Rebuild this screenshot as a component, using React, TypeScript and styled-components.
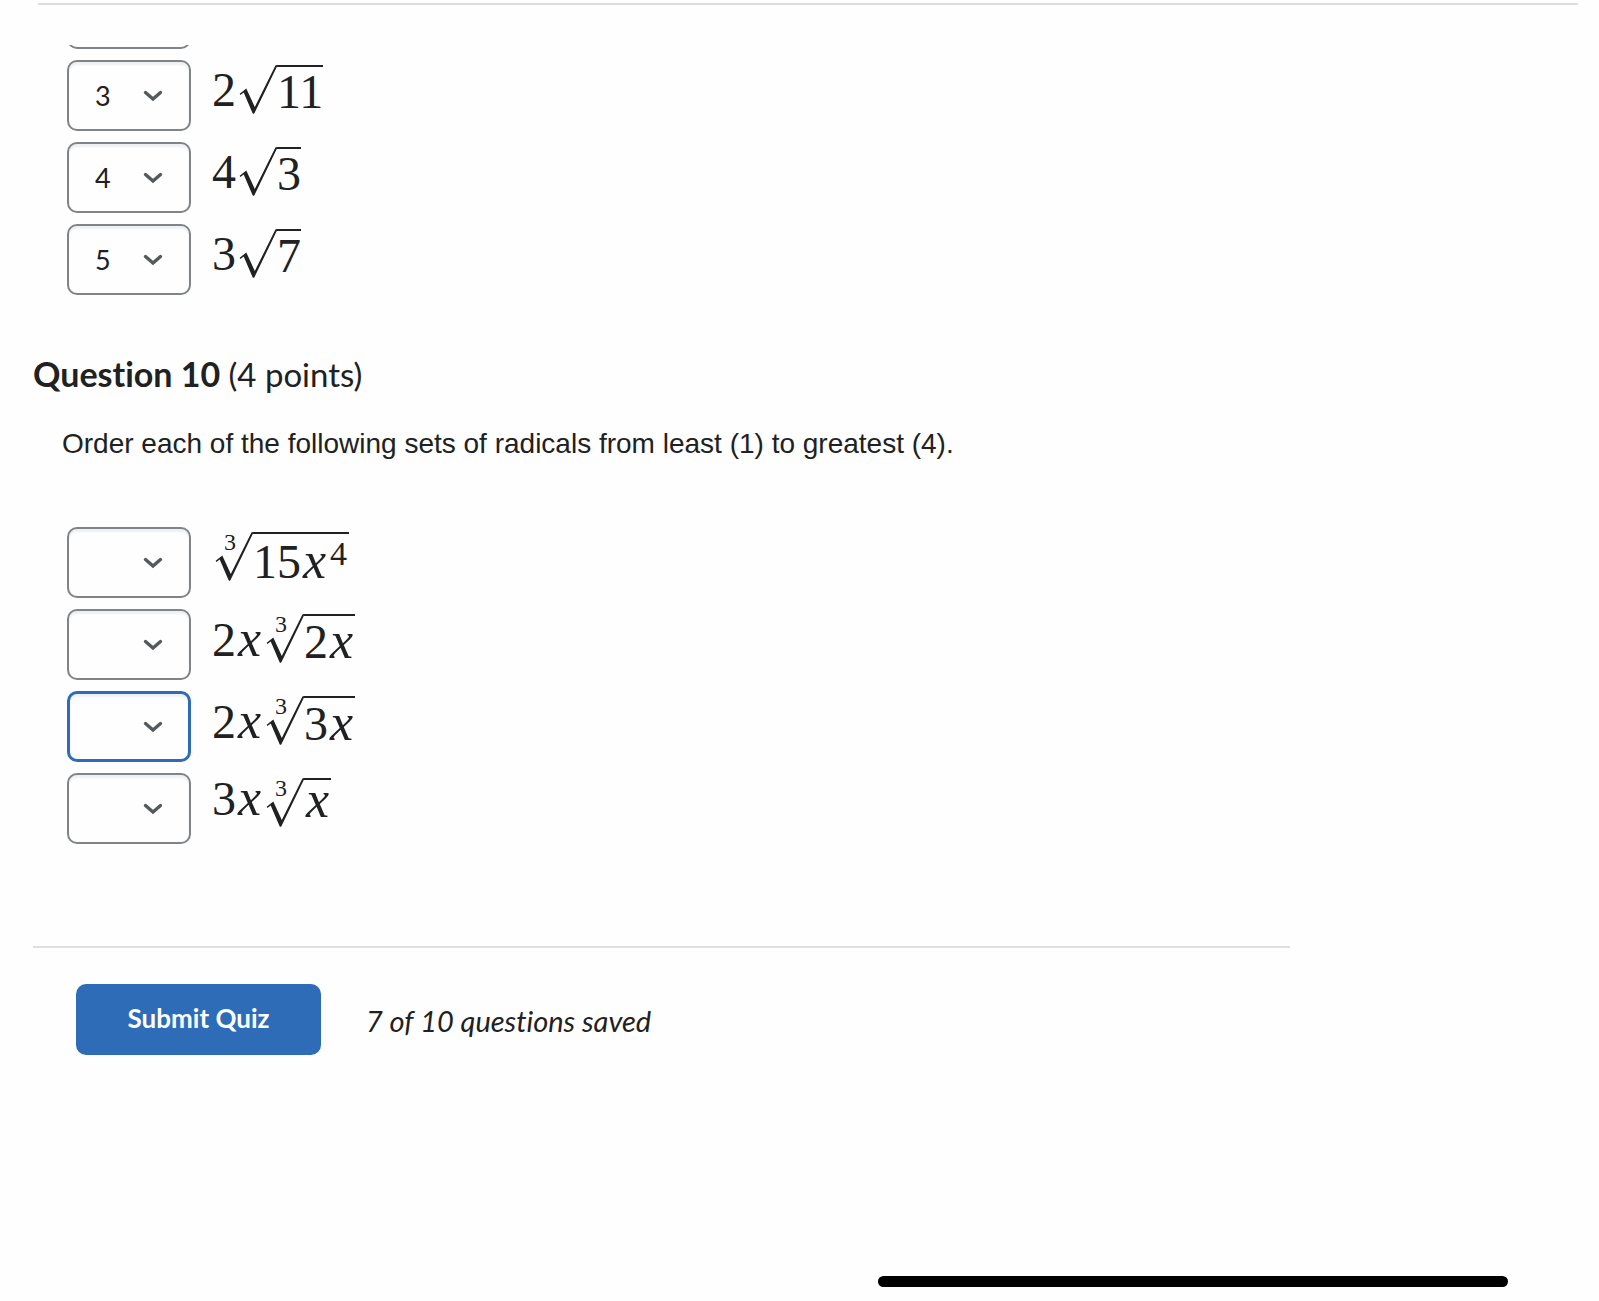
import React from "react";
import styled, { createGlobalStyle } from "styled-components";

const GlobalStyle = createGlobalStyle`
  * { box-sizing: border-box; }
  body {
    margin: 0;
    background: #fefefe;
    color: #202122;
    font-family: Lato, "Open Sans", sans-serif;
    font-variant-ligatures: none;
  }
`;

const Page = styled.main`
  padding: 3px 33px 0;
`;

const TopRule = styled.hr`
  margin: 0 -12px 40px 5px;
  border: 0;
  height: 2px;
  background: #dcdde2;
`;

const BottomRule = styled.hr`
  margin: 102px 0 36px;
  border: 0;
  height: 2px;
  width: 82%;
  background: #dedfdf;
`;

const ClippedRow = styled.div`
  display: flex;
  align-items: flex-end;
  height: 4px;
  margin: 0 0 11px 34px;
  overflow: hidden;
`;

const AnswerList = styled.ul`
  list-style: none;
  margin: 0 0 0 34px;
  padding: 0;
  display: flex;
  flex-direction: column;
  gap: 11px;
`;

const AnswerRow = styled.li`
  display: flex;
  align-items: flex-start;
  gap: 21px;
  height: 71px;
`;

const SelectWrap = styled.span`
  display: grid;
  flex: none;
  width: 124px;
  height: 71px;
  align-items: center;

  > * {
    grid-area: 1 / 1;
  }
`;

const SelectBox = styled.select<{ $active?: boolean }>`
  appearance: none;
  width: 100%;
  height: 71px;
  margin: 0;
  padding: 0 50px 0 26px;
  border: ${(p) => (p.$active ? "3px solid #2f6cb8" : "2px solid #808486")};
  border-radius: 10px;
  outline: none;
  background: #fefefe;
  box-shadow: inset 0 3px 2px #eff0f3;
  color: #202122;
  font: 400 27px/32px Lato, "Open Sans", sans-serif;
`;

const Chevron = styled.svg`
  justify-self: end;
  margin-right: 28px;
  width: 20px;
  height: 12px;
  pointer-events: none;
`;

const Title = styled.h2`
  margin: 58px 0 0;
  font-size: 34px;
  line-height: 42px;
  font-weight: 700;
`;

const Points = styled.span`
  font-size: 33px;
  font-weight: 400;
`;

const Prompt = styled.p`
  margin: 33px 0 67px 29px;
  font-family: "Liberation Sans", Arial, sans-serif;
  font-size: 28px;
  line-height: 32px;
`;

const Expression = styled.span<{ $line: number }>`
  display: flex;
  align-items: flex-start;
  padding-top: 5px;
  font-family: "Liberation Serif", "Times New Roman", serif;
  font-size: 48px;
  line-height: ${(p) => p.$line}px;
  white-space: nowrap;
`;

const Variable = styled.i`
  display: inline-block;
  width: 27px;
  font-size: 52px;
  text-align: center;
`;

const Exponent = styled.sup`
  padding: 0 2px;
  font-size: 34px;
  line-height: 0;
  vertical-align: 13px;
`;

const Root = styled.span`
  display: flex;
  position: relative;
  margin-left: 3px;
`;

const Surd = styled.svg`
  flex: none;
  width: 38px;
  height: 49px;
  fill: #202122;
`;

const Index = styled.span`
  position: absolute;
  left: 9px;
  top: 0;
  font-size: 24px;
  line-height: 20px;
`;

const Radicand = styled.span`
  border-top: 2px solid #202122;
`;

const Actions = styled.div`
  display: flex;
  align-items: center;
  gap: 45px;
  margin-left: 43px;
`;

const SubmitButton = styled.button`
  width: 245px;
  height: 71px;
  padding: 0 0 4px;
  border: 0;
  border-radius: 10px;
  background: #2f6cb8;
  color: #fefefe;
  font: 700 26px/32px Lato, "Open Sans", sans-serif;
`;

const Status = styled.em`
  padding-top: 2px;
  font-size: 29px;
  line-height: 32px;
`;

const HomeIndicator = styled.div`
  position: fixed;
  right: 91px;
  bottom: 14px;
  width: 630px;
  height: 11px;
  border-radius: 6px;
  background: #000;
`;

function RankSelect({ label, value, max, active }: { label: string; value: string; max: number; active?: boolean }) {
  return (
    <SelectWrap>
      <SelectBox aria-label={label} defaultValue={value} $active={active}>
        <option value="" />
        {Array.from({ length: max }, (_, i) => (
          <option key={i} value={String(i + 1)}>{i + 1}</option>
        ))}
      </SelectBox>
      <Chevron viewBox="0 0 20 12" aria-hidden="true">
        <path d="M2.5 2.5 L10 9 L17.5 2.5" fill="none" stroke="#565a5c" strokeWidth="3.4" strokeLinecap="round" strokeLinejoin="miter" />
      </Chevron>
    </SelectWrap>
  );
}

function Radical({ index, children }: { index?: string; children: React.ReactNode }) {
  return (
    <Root>
      <Surd viewBox="0 0 38 49" aria-hidden="true">
        <path d="M0.7 28.7 L7.3 23.4 L15.8 42 L36.4 0.6 Q37 0 38 0 L38 1.6 L15.4 48.2 Q14.5 49.2 13.6 48.2 L4.7 27.4 L1.4 30 Z" />
      </Surd>
      {index && <Index>{index}</Index>}
      <Radicand>{children}</Radicand>
    </Root>
  );
}

const X = () => <Variable>x</Variable>;

type Item = {
  label: string;
  value: string;
  coefficient?: React.ReactNode;
  radicand: React.ReactNode;
  index?: string;
  line?: number;
  active?: boolean;
};

const previousItems: Item[] = [
  { label: "Rank of 2 root 11", value: "3", coefficient: "2", radicand: "11" },
  { label: "Rank of 4 root 3", value: "4", coefficient: "4", radicand: "3" },
  { label: "Rank of 3 root 7", value: "5", coefficient: "3", radicand: "7" },
];

// A radicand with an exponent sits lower under the bar; a lone variable sits higher.
const currentItems: Item[] = [
  { label: "Rank of cube root of 15x to the 4", value: "", index: "3", line: 54, radicand: <>15<X /><Exponent>4</Exponent></> },
  { label: "Rank of 2x cube root of 2x", value: "", index: "3", coefficient: <>2<X /></>, radicand: <>2<X /></> },
  { label: "Rank of 2x cube root of 3x", value: "", index: "3", coefficient: <>2<X /></>, radicand: <>3<X /></>, active: true },
  { label: "Rank of 3x cube root of x", value: "", index: "3", line: 40, coefficient: <>3<X /></>, radicand: <X /> },
];

function Answers({ items, max }: { items: Item[]; max: number }) {
  return (
    <AnswerList>
      {items.map((item) => (
        <AnswerRow key={item.label}>
          <RankSelect label={item.label} value={item.value} max={max} active={item.active} />
          <Expression $line={item.line ?? 50}>
            {item.coefficient && <span>{item.coefficient}</span>}
            <Radical index={item.index}>{item.radicand}</Radical>
          </Expression>
        </AnswerRow>
      ))}
    </AnswerList>
  );
}

export default function App() {
  return (
    <>
      <GlobalStyle />
      <Page>
        <TopRule />
        <ClippedRow>
          <RankSelect label="Previous rank" value="" max={5} />
        </ClippedRow>
        <Answers items={previousItems} max={5} />
        <Title>
          Question 10 <Points>(4 points)</Points>
        </Title>
        <Prompt>Order each of the following sets of radicals from least (1) to greatest (4).</Prompt>
        <Answers items={currentItems} max={4} />
        <BottomRule />
        <Actions>
          <SubmitButton type="button">Submit Quiz</SubmitButton>
          <Status>7 of 10 questions saved</Status>
        </Actions>
      </Page>
      <HomeIndicator />
    </>
  );
}
